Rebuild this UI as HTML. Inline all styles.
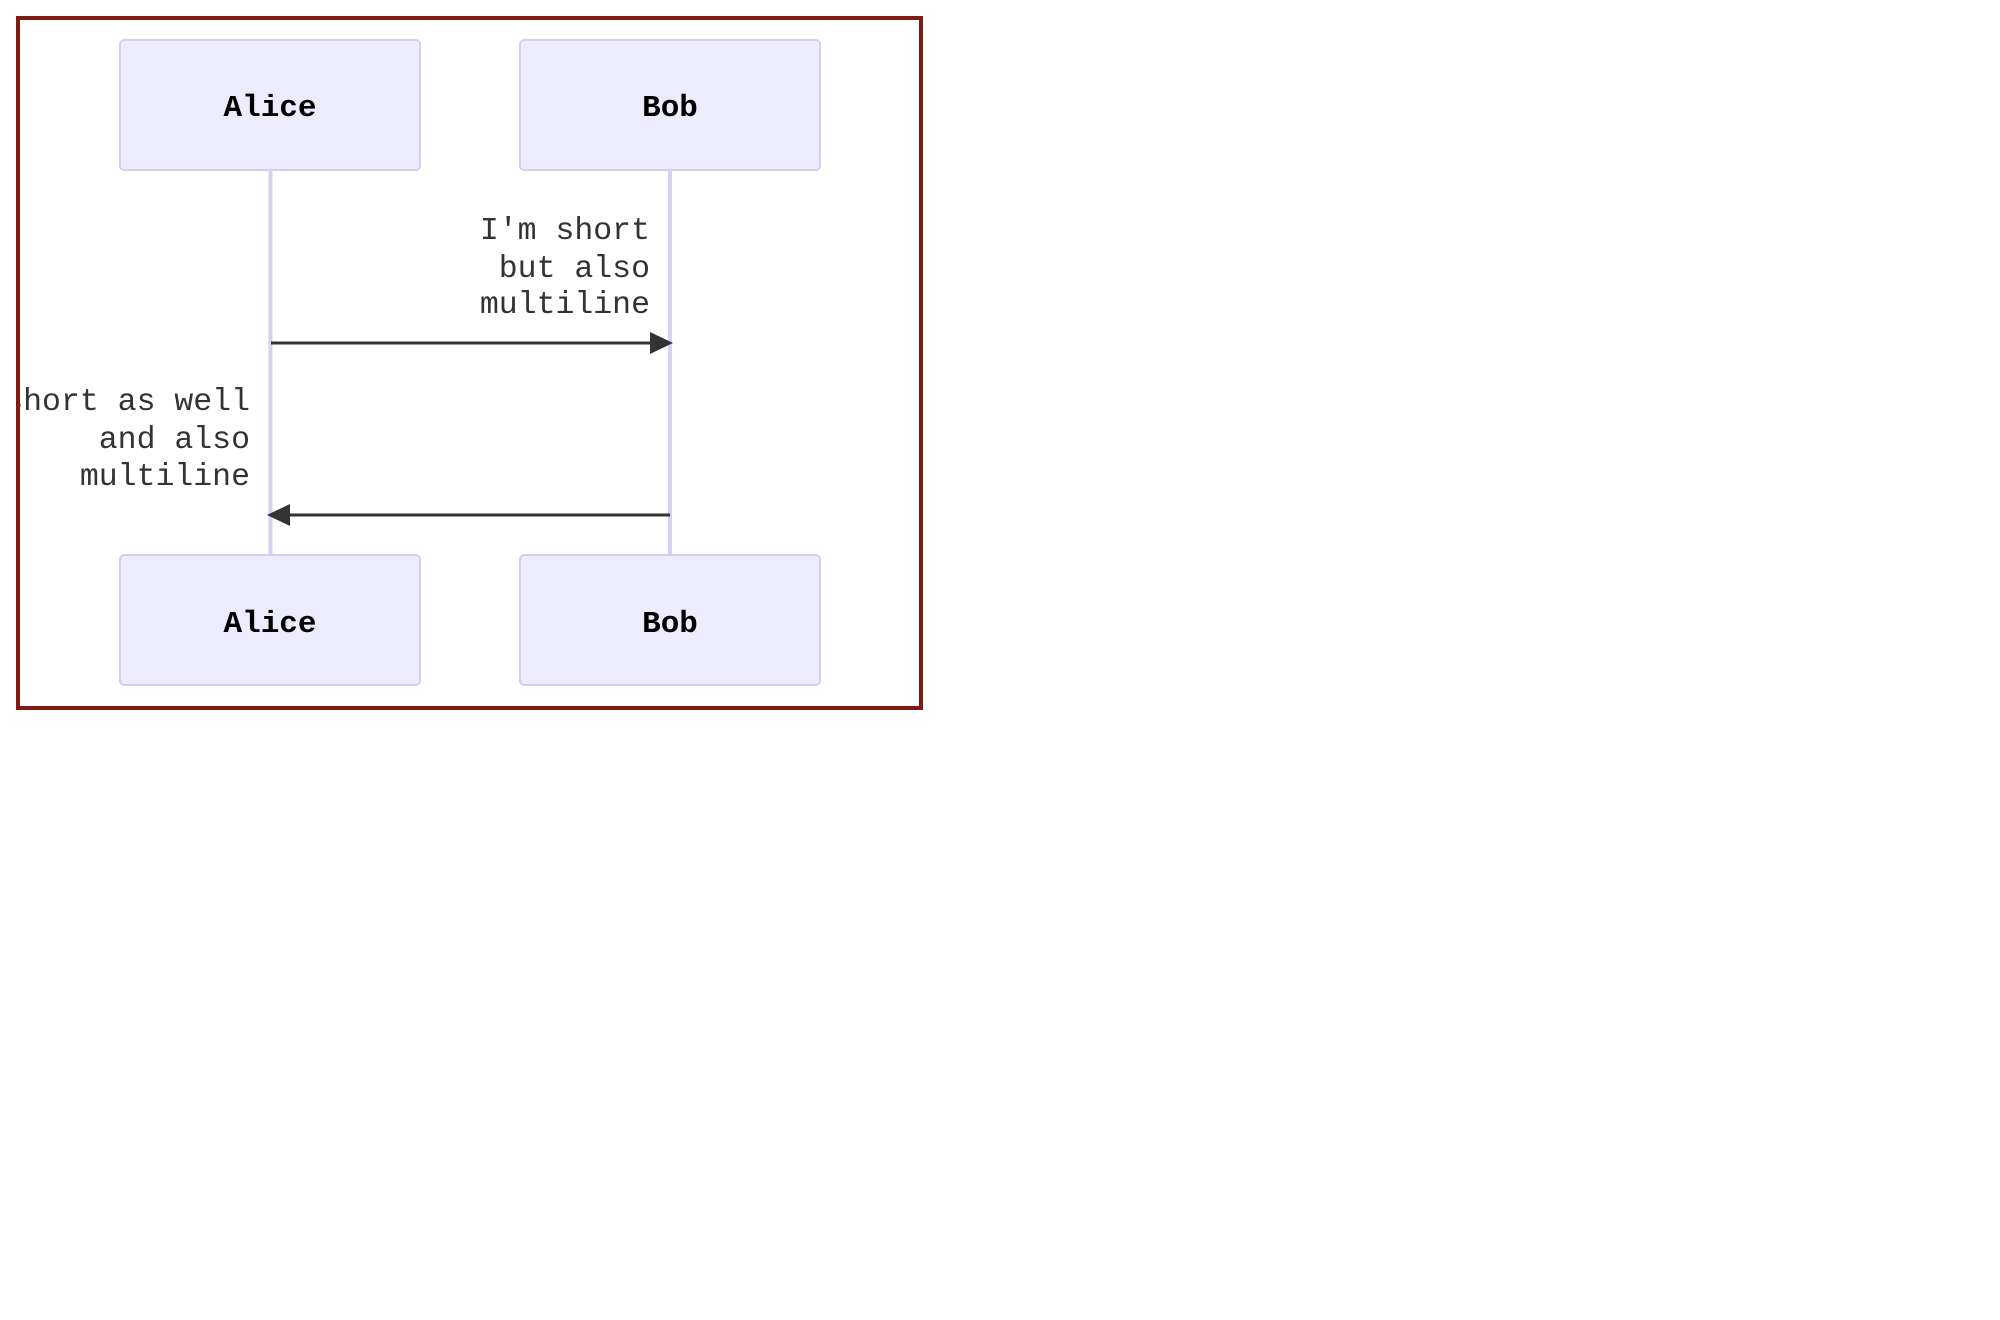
<!DOCTYPE html>
<html><head><style>
html,body{margin:0;padding:0;background:#fff;width:2000px;height:1320px;overflow:hidden}
svg{position:absolute;left:0;top:0}
</style></head><body>
<svg width="2000" height="1320" xmlns="http://www.w3.org/2000/svg">
<defs><clipPath id="c"><rect x="20" y="20" width="899" height="686"/></clipPath></defs>
<rect x="18" y="18" width="903" height="690" fill="#fff" stroke="#7d1a12" stroke-width="4"/>
<g clip-path="url(#c)" font-family="Liberation Mono, monospace">
<line x1="270.5" y1="170" x2="270.5" y2="554" stroke="#d6d0f2" stroke-width="4"/>
<line x1="670" y1="170" x2="670" y2="554" stroke="#d6d0f2" stroke-width="4"/>
<rect x="120" y="40" width="300" height="130" rx="4" fill="#ececfe" stroke="#d4cff1" stroke-width="2"/>
<rect x="520" y="40" width="300" height="130" rx="4" fill="#ececfe" stroke="#d4cff1" stroke-width="2"/>
<rect x="120" y="555" width="300" height="130" rx="4" fill="#ececfe" stroke="#d4cff1" stroke-width="2"/>
<rect x="520" y="555" width="300" height="130" rx="4" fill="#ececfe" stroke="#d4cff1" stroke-width="2"/>
<g font-size="31" font-weight="bold" fill="#000" text-anchor="middle">
<text x="270" y="116">Alice</text><text x="670" y="116">Bob</text>
<text x="270" y="632">Alice</text><text x="670" y="632">Bob</text>
</g>
<g font-size="31.5" fill="#333" text-anchor="end">
<text x="650" y="239">I'm short</text>
<text x="650" y="277">but also</text>
<text x="650" y="313">multiline</text>
<text x="250" y="410">short as well</text>
<text x="250" y="448">and also</text>
<text x="250" y="485">multiline</text>
</g>
<line x1="271" y1="343" x2="653" y2="343" stroke="#333" stroke-width="3"/>
<polygon points="650,332 673,343 650,354" fill="#333"/>
<line x1="670" y1="515" x2="288" y2="515" stroke="#333" stroke-width="3"/>
<polygon points="290,504 267,515 290,526" fill="#333"/>
</g>
</svg>
</body></html>
